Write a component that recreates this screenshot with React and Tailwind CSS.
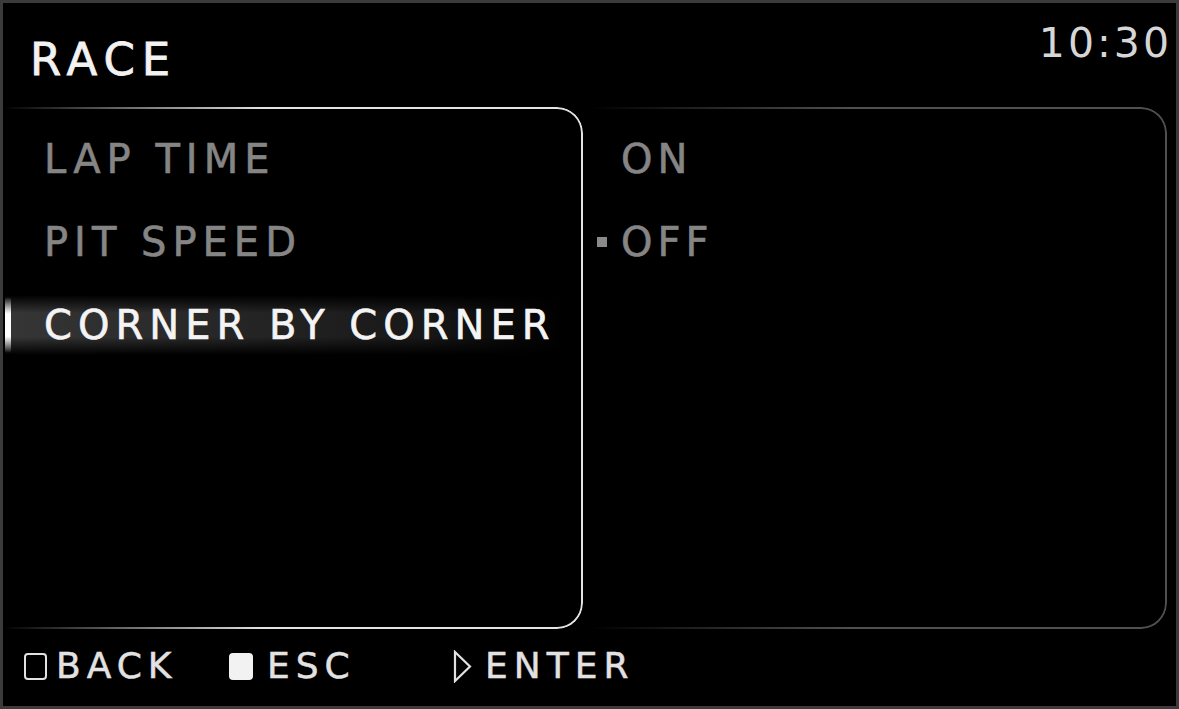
import React from "react";

const font = { fontFamily: '"DejaVu Sans", "Liberation Sans", sans-serif' };

const items = [
  { label: "LAP TIME", active: false },
  { label: "PIT SPEED", active: false },
  { label: "CORNER BY CORNER", active: true },
];

const options = [
  { label: "ON", selected: false },
  { label: "OFF", selected: true },
];

function Frame({ color }) {
  // decorative rounded frame, fading in from the left edge
  return (
    <div
      className={`pointer-events-none absolute inset-0 border-[2.5px] border-l-0 rounded-r-[26px] ${color} [mask-image:linear-gradient(to_right,transparent_0%,black_45%)]`}
    />
  );
}

function MenuRow({ label, active }) {
  return (
    <div className="relative flex h-[60px] items-center pl-[2px]">
      {active && (
        <div className="absolute inset-y-0 left-[2px] right-[20px] bg-[linear-gradient(to_right,#363636_0%,#2a2a2a_30%,#181818_75%,transparent_100%)] [mask-image:linear-gradient(to_bottom,transparent_0%,black_30%,black_70%,transparent_100%)]" />
      )}
      <div
        className={`relative h-[56px] w-[6px] rounded-full ${
          active ? "bg-[linear-gradient(to_bottom,transparent_0%,#ffffff_30%,#ffffff_70%,transparent_100%)]" : ""
        }`}
      />
      <span
        className={`relative ml-[33px] text-[40px] leading-none tracking-[6px] [-webkit-text-stroke:0.6px_currentColor] ${
          active ? "text-[#f4f4f4]" : "text-[#858585]"
        }`}
      >
        {label}
      </span>
    </div>
  );
}

function OptionRow({ label, selected }) {
  return (
    <div className="flex h-[60px] items-center pl-[7px]">
      <div className={`h-[10px] w-[10px] ${selected ? "bg-[#8a8a8a]" : ""}`} />
      <span className="ml-[14px] text-[40px] leading-none tracking-[5px] text-[#858585] [-webkit-text-stroke:0.6px_currentColor]">
        {label}
      </span>
    </div>
  );
}

export default function App() {
  return (
    <div style={font} className="h-[709px] w-[1179px] overflow-hidden border-[3px] border-[#3b3b3b] bg-black flex flex-col">
      {/* header */}
      <div className="flex h-[104px] shrink-0 items-start justify-between">
        <div className="ml-[27px] mt-[34px] text-[45px] leading-none tracking-[7px] text-[#f2f2f2] [-webkit-text-stroke:0.8px_currentColor]">
          RACE
        </div>
        <div className="mr-[4px] mt-[20px] text-[41px] leading-none tracking-[3px] text-[#d6d6d6]">10:30</div>
      </div>

      {/* panels */}
      <div className="flex h-[522px] shrink-0 gap-[7px]">
        <div className="relative w-[580px]">
          <Frame color="border-[#e4e4e4]" />
          <div className="flex flex-col gap-[23px] pt-[22px]">
            {items.map((it) => (
              <MenuRow key={it.label} {...it} />
            ))}
          </div>
        </div>
        <div className="relative w-[577px]">
          <Frame color="border-[#505050]" />
          <div className="flex flex-col gap-[23px] pt-[22px]">
            {options.map((o) => (
              <OptionRow key={o.label} {...o} />
            ))}
          </div>
        </div>
      </div>

      {/* footer */}
      <div className="flex items-center pl-[21px] pt-[19px] text-[36px] leading-none tracking-[6px] text-[#e2e2e2] [-webkit-text-stroke:0.5px_currentColor]">
        <div className="flex w-[205px] items-center">
          <div className="h-[27px] w-[23px] rounded-[4px] border-2 border-[#e2e2e2]" />
          <span className="ml-[9px]">BACK</span>
        </div>
        <div className="flex w-[224px] items-center">
          <div className="h-[27px] w-[24px] rounded-[4px] bg-[#f2f2f2]" />
          <span className="ml-[14px]">ESC</span>
        </div>
        <div className="flex items-center">
          <svg width="19" height="33" viewBox="0 0 19 33" className="shrink-0">
            <path d="M2 2 L17 16.5 L2 31 Z" fill="none" stroke="#e2e2e2" strokeWidth="2.2" strokeLinejoin="miter" />
          </svg>
          <span className="ml-[13px]">ENTER</span>
        </div>
      </div>
    </div>
  );
}
